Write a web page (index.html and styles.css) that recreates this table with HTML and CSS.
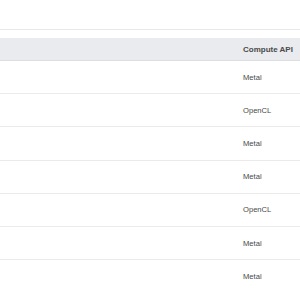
FILE: index.html
```html
<!DOCTYPE html>
<html lang="en">
<head>
  <meta charset="UTF-8" />
  <meta name="viewport" content="width=device-width, initial-scale=1.0"/>
  <title>Devices</title>
  <link rel="stylesheet" href="styles.css">
</head>
<body>
  <div class="toolbar"></div>

  <table class="device-table">
    <thead>
      <tr>
        <th class="col-name"></th>
        <th class="col-api">Compute API</th>
      </tr>
    </thead>
    <tbody>
      <tr><td></td><td>Metal</td></tr>
      <tr><td></td><td>OpenCL</td></tr>
      <tr><td></td><td>Metal</td></tr>
      <tr><td></td><td>Metal</td></tr>
      <tr><td></td><td>OpenCL</td></tr>
      <tr><td></td><td>Metal</td></tr>
      <tr class="last"><td></td><td>Metal</td></tr>
    </tbody>
  </table>
</body>
</html>
```

FILE: styles.css
```css
body {
  margin: 0;
  font-family: 'Liberation Sans', Arial, sans-serif;
  background-color: #fff;
  color: #444;
  overflow: hidden;
}

.toolbar {
  height: 29px;
  border-bottom: 1px solid #e8e8ea;
  margin-bottom: 8px;
}

.device-table {
  width: 100%;
  border-collapse: collapse;
  table-layout: fixed;
}

.device-table th {
  height: 22px;
  padding: 0;
  background-color: #e9ebee;
  border-bottom: 1px solid #dcdee2;
  font-size: 8px;
  font-weight: bold;
  color: #4a4a4a;
  text-align: left;
}

.col-api {
  width: 57px;
}

.device-table td {
  height: 32.2px;
  padding: 0;
  border-bottom: 1px solid #ebebeb;
  font-size: 7.6px;
  color: #484848;
}

.device-table tr.last td {
  border-bottom: none;
}
```
